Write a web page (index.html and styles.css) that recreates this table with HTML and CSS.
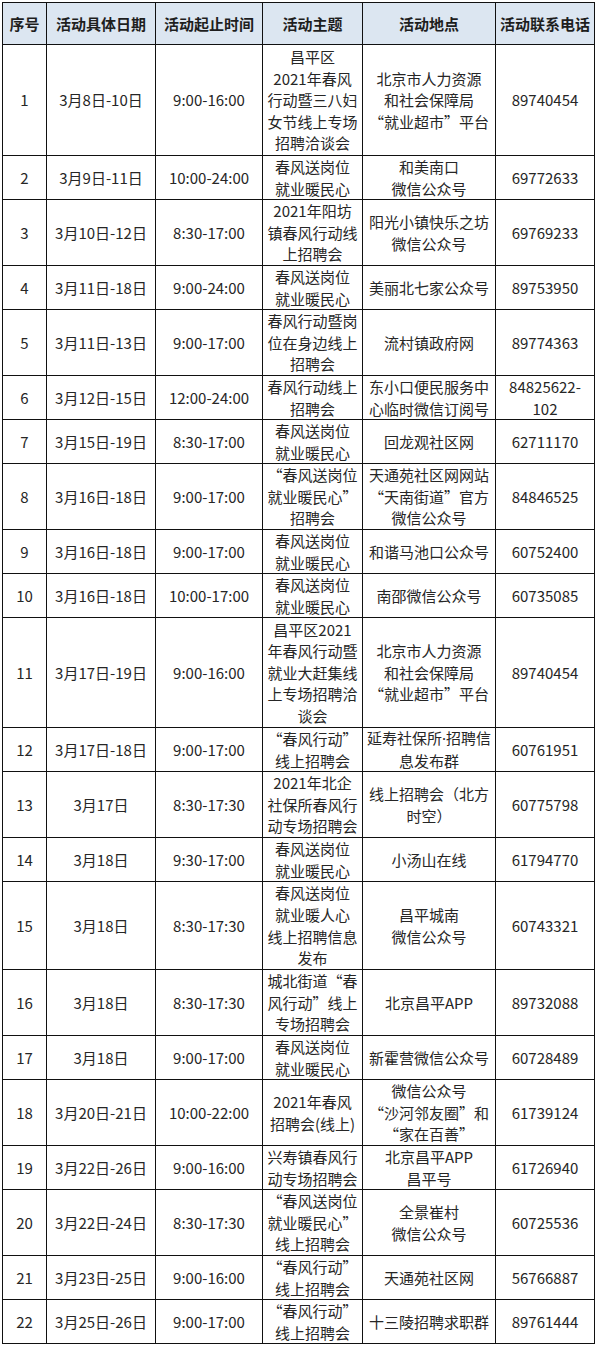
FILE: index.html
```html
<!DOCTYPE html>
<html lang="zh-CN">
<head>
<meta charset="utf-8">
<title>春风行动招聘会</title>
<link rel="stylesheet" href="styles.css">
</head>
<body>
<div class="sheet">
  <div class="c h">序号</div><div class="c h">活动具体日期</div><div class="c h">活动起止时间</div><div class="c h">活动主题</div><div class="c h">活动地点</div><div class="c h">活动联系电话</div>

  <div class="c">1</div><div class="c">3月8日-10日</div><div class="c">9:00-16:00</div><div class="c">昌平区<br>2021年春风<br>行动暨三八妇<br>女节线上专场<br>招聘洽谈会</div><div class="c">北京市人力资源<br>和社会保障局<br>“就业超市”平台</div><div class="c">89740454</div>

  <div class="c">2</div><div class="c">3月9日-11日</div><div class="c">10:00-24:00</div><div class="c">春风送岗位<br>就业暖民心</div><div class="c">和美南口<br>微信公众号</div><div class="c">69772633</div>

  <div class="c">3</div><div class="c">3月10日-12日</div><div class="c">8:30-17:00</div><div class="c">2021年阳坊<br>镇春风行动线<br>上招聘会</div><div class="c">阳光小镇快乐之坊<br>微信公众号</div><div class="c">69769233</div>

  <div class="c">4</div><div class="c">3月11日-18日</div><div class="c">9:00-24:00</div><div class="c">春风送岗位<br>就业暖民心</div><div class="c">美丽北七家公众号</div><div class="c">89753950</div>

  <div class="c">5</div><div class="c">3月11日-13日</div><div class="c">9:00-17:00</div><div class="c">春风行动暨岗<br>位在身边线上<br>招聘会</div><div class="c">流村镇政府网</div><div class="c">89774363</div>

  <div class="c">6</div><div class="c">3月12日-15日</div><div class="c">12:00-24:00</div><div class="c">春风行动线上<br>招聘会</div><div class="c">东小口便民服务中<br>心临时微信订阅号</div><div class="c">84825622-<br>102</div>

  <div class="c">7</div><div class="c">3月15日-19日</div><div class="c">8:30-17:00</div><div class="c">春风送岗位<br>就业暖民心</div><div class="c">回龙观社区网</div><div class="c">62711170</div>

  <div class="c">8</div><div class="c">3月16日-18日</div><div class="c">9:00-17:00</div><div class="c">“春风送岗位<br>就业暖民心”<br>招聘会</div><div class="c">天通苑社区网网站<br>“天南街道”官方<br>微信公众号</div><div class="c">84846525</div>

  <div class="c">9</div><div class="c">3月16日-18日</div><div class="c">9:00-17:00</div><div class="c">春风送岗位<br>就业暖民心</div><div class="c">和谐马池口公众号</div><div class="c">60752400</div>

  <div class="c">10</div><div class="c">3月16日-18日</div><div class="c">10:00-17:00</div><div class="c">春风送岗位<br>就业暖民心</div><div class="c">南邵微信公众号</div><div class="c">60735085</div>

  <div class="c">11</div><div class="c">3月17日-19日</div><div class="c">9:00-16:00</div><div class="c">昌平区2021<br>年春风行动暨<br>就业大赶集线<br>上专场招聘洽<br>谈会</div><div class="c">北京市人力资源<br>和社会保障局<br>“就业超市”平台</div><div class="c">89740454</div>

  <div class="c">12</div><div class="c">3月17日-18日</div><div class="c">9:00-17:00</div><div class="c">“春风行动”<br>线上招聘会</div><div class="c"><div class="t">延寿社保所<span class="dot">·</span>招聘信<br>息发布群</div></div><div class="c">60761951</div>

  <div class="c">13</div><div class="c">3月17日</div><div class="c">8:30-17:30</div><div class="c">2021年北企<br>社保所春风行<br>动专场招聘会</div><div class="c">线上招聘会（北方<br>时空）</div><div class="c">60775798</div>

  <div class="c">14</div><div class="c">3月18日</div><div class="c">9:30-17:00</div><div class="c">春风送岗位<br>就业暖民心</div><div class="c">小汤山在线</div><div class="c">61794770</div>

  <div class="c">15</div><div class="c">3月18日</div><div class="c">8:30-17:30</div><div class="c">春风送岗位<br>就业暖人心<br>线上招聘信息<br>发布</div><div class="c">昌平城南<br>微信公众号</div><div class="c">60743321</div>

  <div class="c">16</div><div class="c">3月18日</div><div class="c">8:30-17:30</div><div class="c">城北街道“春<br>风行动”线上<br>专场招聘会</div><div class="c">北京昌平APP</div><div class="c">89732088</div>

  <div class="c">17</div><div class="c">3月18日</div><div class="c">9:00-17:00</div><div class="c">春风送岗位<br>就业暖民心</div><div class="c">新霍营微信公众号</div><div class="c">60728489</div>

  <div class="c">18</div><div class="c">3月20日-21日</div><div class="c">10:00-22:00</div><div class="c">2021年春风<br>招聘会(线上)</div><div class="c">微信公众号<br>“沙河邻友圈”和<br>“家在百善”</div><div class="c">61739124</div>

  <div class="c">19</div><div class="c">3月22日-26日</div><div class="c">9:00-16:00</div><div class="c">兴寿镇春风行<br>动专场招聘会</div><div class="c">北京昌平APP<br>昌平号</div><div class="c">61726940</div>

  <div class="c">20</div><div class="c">3月22日-24日</div><div class="c">8:30-17:30</div><div class="c">“春风送岗位<br>就业暖民心”<br>线上招聘会</div><div class="c">全景崔村<br>微信公众号</div><div class="c">60725536</div>

  <div class="c">21</div><div class="c">3月23日-25日</div><div class="c">9:00-16:00</div><div class="c">“春风行动”<br>线上招聘会</div><div class="c">天通苑社区网</div><div class="c">56766887</div>

  <div class="c">22</div><div class="c">3月25日-26日</div><div class="c">9:00-17:00</div><div class="c">“春风行动”<br>线上招聘会</div><div class="c">十三陵招聘求职群</div><div class="c">89761444</div>
</div>
</body>
</html>
```

FILE: styles.css
```css
html, body {
  margin: 0;
  padding: 0;
  background: #ffffff;
}

body {
  font-family: "Noto Sans CJK SC", "Noto Sans", sans-serif;
  color: #262626;
}

.sheet {
  margin: 2px 0 0 2px;
  width: 593px;
  box-sizing: border-box;
  display: grid;
  grid-template-columns: 43px 108px 106px 99px 132px 98px;
  grid-template-rows: 41px 110px 43px 65px 43px 65px 43px 43px 65px 43px 43px 109px 43px 65px 43px 87px 65px 43px 65px 43px 65px 43px 43px;
  gap: 1px;
  padding: 1px;
  background: #111111;
}

.c {
  background: #ffffff;
  display: flex;
  align-items: center;
  justify-content: center;
  text-align: center;
  font-size: 15px;
  line-height: 21.6px;
  white-space: nowrap;
  overflow: hidden;
}

.t {
  text-align: center;
}

.dot {
  font-family: "Noto Sans", "DejaVu Sans", sans-serif;
}

.h {
  background: #dce6f1;
  font-weight: bold;
  color: #1e1e1e;
}
```
